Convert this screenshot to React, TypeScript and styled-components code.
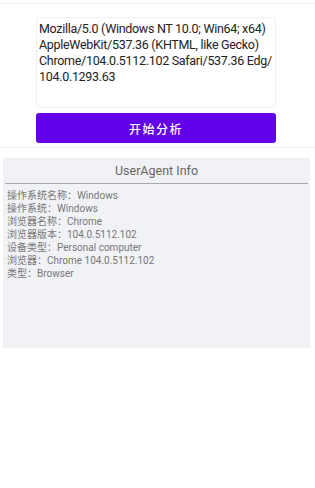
import { useState } from 'react';
import styled, { createGlobalStyle } from 'styled-components';

const GlobalStyle = createGlobalStyle`
  html, body {
    margin: 0;
    padding: 0;
    background: #ffffff;
    font-family: Roboto, "Noto Sans CJK SC", sans-serif;
  }
`;

const Page = styled.div`
  width: 315px;
  min-height: 488px;
  padding-top: 3px;
  box-sizing: border-box;
`;

const FormSection = styled.section`
  border-top: 1px solid #f3f3f3;
  border-bottom: 1px solid #f0f0f0;
  padding: 13px 39px 4px 36px;
  display: flex;
  flex-direction: column;
  gap: 5px;
`;

const UaInput = styled.textarea`
  width: 100%;
  height: 91px;
  box-sizing: border-box;
  resize: none;
  border: 1px solid #f0f0f0;
  border-radius: 4px;
  padding: 3px 0 2px 2px;
  font-family: Roboto, "Noto Sans CJK SC", sans-serif;
  font-size: 12.5px;
  letter-spacing: -0.3px;
  line-height: 16px;
  color: #222;
  background: #fff;
  outline: none;
  overflow: hidden;
`;

const AnalyzeButton = styled.button`
  height: 30px;
  border: none;
  border-radius: 3px;
  background: #6200ea;
  color: #fff;
  font-family: "Noto Sans CJK SC", sans-serif;
  font-size: 12px;
  font-weight: 500;
  letter-spacing: 1.5px;
  cursor: pointer;
`;

const InfoPanel = styled.section`
  margin: 10px 5px 0 3px;
  height: 190px;
  background: #f1f2f6;
  padding: 0 2px;
`;

const InfoTitle = styled.h2`
  margin: 0;
  padding: 4px 0 4px;
  text-align: center;
  font-weight: 400;
  font-size: 12.5px;
  line-height: 17px;
  color: #666;
  border-bottom: 1px solid #a9a9a9;
`;

const InfoList = styled.ul`
  list-style: none;
  margin: 0;
  padding: 5px 0 0 2px;
`;

const InfoRow = styled.li`
  font-size: 10px;
  line-height: 13px;
  color: #777;
  font-family: Roboto, "Noto Sans CJK SC", sans-serif;
`;

const UA =
  'Mozilla/5.0 (Windows NT 10.0; Win64; x64) AppleWebKit/537.36 (KHTML, like Gecko) Chrome/104.0.5112.102 Safari/537.36 Edg/\u200b104.0.1293.63';

const rows = [
  ['操作系统名称', 'Windows'],
  ['操作系统', 'Windows'],
  ['浏览器名称', 'Chrome'],
  ['浏览器版本', '104.0.5112.102'],
  ['设备类型', 'Personal computer'],
  ['浏览器', 'Chrome 104.0.5112.102'],
  ['类型', 'Browser'],
];

export default function App() {
  const [ua, setUa] = useState(UA);

  return (
    <Page>
      <GlobalStyle />
      <FormSection>
        <UaInput value={ua} onChange={(e) => setUa(e.target.value)} />
        <AnalyzeButton>开始分析</AnalyzeButton>
      </FormSection>
      <InfoPanel>
        <InfoTitle>UserAgent Info</InfoTitle>
        <InfoList>
          {rows.map(([k, v]) => (
            <InfoRow key={k}>
              {k}：{v}
            </InfoRow>
          ))}
        </InfoList>
      </InfoPanel>
    </Page>
  );
}
